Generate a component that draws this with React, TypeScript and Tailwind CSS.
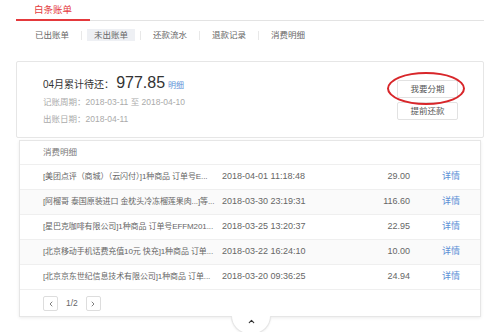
import { ChevronLeft, ChevronRight, ChevronUp } from "lucide-react"

const rows = [
  { desc: "[美团点评（商城）（云闪付）]1种商品 订单号E...", date: "2018-04-01 11:18:48", amount: "29.00" },
  { desc: "[阿榴哥 泰国原装进口 金枕头冷冻榴莲果肉...]等...", date: "2018-03-30 23:19:31", amount: "116.60" },
  { desc: "[星巴克咖啡有限公司]1种商品 订单号EFFM201...", date: "2018-03-25 13:20:37", amount: "22.95" },
  { desc: "[北京移动手机话费充值10元 快充]1种商品 订单...", date: "2018-03-22 16:24:10", amount: "10.00" },
  { desc: "[北京京东世纪信息技术有限公司]1种商品 订单...", date: "2018-03-20 09:36:25", amount: "24.94" },
]

const subTabs = ["已出账单", "未出账单", "还款流水", "退款记录", "消费明细"]

export default function App() {
  return (
    <div
      className="relative w-[493px] h-[332px] overflow-hidden bg-white text-[#666]"
      style={{ fontFamily: '"Liberation Sans", "Noto Sans CJK SC", sans-serif' }}
    >
      {/* top tab */}
      <div className="ml-4 w-[468px] flex border-b border-[#e3e3e3] pt-[1px]">
        <div className="w-[74px] h-[20px] flex items-center justify-center border-b-2 border-[#e4393c] -mb-px text-[9.5px] text-[#e4393c]">
          白条账单
        </div>
      </div>

      {/* sub tabs */}
      <div className="flex items-center pl-[28px] mt-[8px] h-[12px] text-[8.5px]">
        {subTabs.map((t, i) => (
          <div key={t} className="flex items-center">
            {i > 0 && <span className="w-px h-[9px] bg-[#e8e8e8] mx-[5px]" />}
            <span
              className={
                "w-[48px] h-[12px] flex items-center justify-center " +
                (i === 1 ? "bg-[#eef0f4]" : "")
              }
            >
              {t}
            </span>
          </div>
        ))}
      </div>

      {/* summary card */}
      <div className="ml-4 mt-[20px] w-[468px] h-[77px] border border-[#e6e6e6] rounded-[2px] flex justify-between">
        <div className="pl-[26px] pt-[9px]">
          <div className="flex items-baseline text-[#333]">
            <span className="text-[10px]">04月累计待还：</span>
            <span className="text-[16px] ml-[2px]">977.85</span>
            <span className="text-[8px] text-[#5b8fd6] ml-[3px]">明细</span>
          </div>
          <div className="text-[8.5px] text-[#aaa] mt-[1px]">记账周期：2018-03-11 至 2018-04-10</div>
          <div className="text-[8.5px] text-[#aaa] mt-[4px]">出账日期：2018-04-11</div>
        </div>
        <div className="pr-[25px] pt-[18px] flex flex-col gap-[4px]">
          <div className="w-[61px] h-[18px] border border-[#e2e2e2] rounded-[2px] flex items-center justify-center text-[8.5px] text-[#555]">
            我要分期
          </div>
          <div className="w-[61px] h-[18px] border border-[#e2e2e2] rounded-[2px] flex items-center justify-center text-[8.5px] text-[#555]">
            提前还款
          </div>
        </div>
      </div>

      {/* detail card */}
      <div className="ml-[19px] mt-[2px] w-[462px] h-[177px] border border-[#e6e6e6] shadow-[0_1px_3px_rgba(0,0,0,0.08)] bg-white">
        <div className="h-[23px] pl-[23px] flex items-center text-[8.5px] text-[#777]">消费明细</div>
        {rows.map((r, i) => (
          <div
            key={i}
            className={
              "h-[25px] flex items-center border-t border-[#efefef] text-[9px] " +
              (i % 2 === 1 ? "bg-[#fafafa]" : "")
            }
          >
            <span className="w-[179px] ml-[23px] shrink-0 whitespace-nowrap text-[8px] tracking-[-0.1px]">{r.desc}</span>
            <span className="w-[110px] shrink-0">{r.date}</span>
            <span className="w-[78px] text-right shrink-0">{r.amount}</span>
            <span className="ml-[32px] text-[#5b8fd6] shrink-0">详情</span>
          </div>
        ))}
        <div className="h-[28px] border-t border-[#efefef] flex items-center pl-[23px] text-[8.5px]">
          <span className="w-[15px] h-[15px] border border-[#ddd] rounded-[2px] flex items-center justify-center">
            <ChevronLeft className="w-[8px] h-[8px]" strokeWidth={2.5} />
          </span>
          <span className="mx-[8px]">1/2</span>
          <span className="w-[15px] h-[15px] border border-[#ddd] rounded-[2px] flex items-center justify-center">
            <ChevronRight className="w-[8px] h-[8px]" strokeWidth={2.5} />
          </span>
        </div>
      </div>

      {/* bottom hump */}
      <div className="absolute left-[231px] top-[316px] w-[40px] h-[18px] bg-white border border-t-0 border-[#e6e6e6] rounded-b-full flex justify-center shadow-[0_1px_2px_rgba(0,0,0,0.06)]">
        <ChevronUp className="w-[9px] h-[9px] mt-[1px] text-[#333]" strokeWidth={3} />
      </div>

      {/* red annotation ellipse */}
      <div className="absolute left-[387px] top-[72px] w-[78px] h-[33px] rounded-[50%] border-2 border-[#d8262a]" />
    </div>
  )
}
